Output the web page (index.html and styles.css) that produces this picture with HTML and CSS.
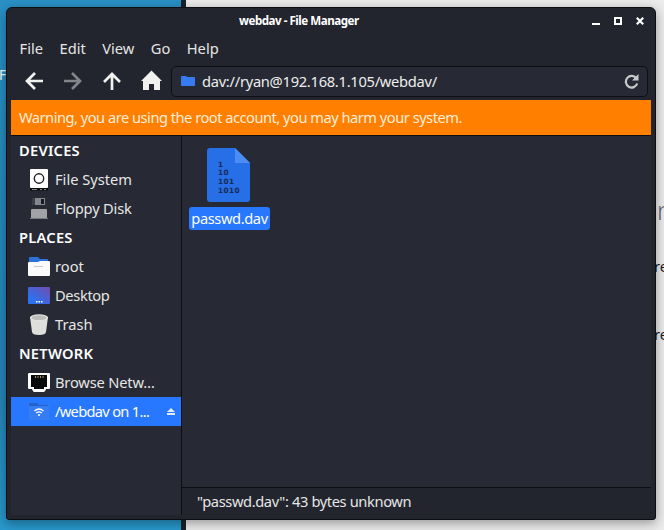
FILE: index.html
```html
<!DOCTYPE html>
<html lang="en">
<head>
<meta charset="utf-8">
<title>webdav - File Manager</title>
<link rel="stylesheet" href="styles.css">
</head>
<body>
<div class="wallpaper"></div>
<div class="browser"></div>
<span class="behind label-f">F</span>
<span class="behind letter-n">n</span>
<span class="behind re-one">re</span>
<span class="behind re-two">re</span>
<main class="window">
  <header class="titlebar">
    <h1 class="title">webdav - File Manager</h1>
    <svg class="controls" width="54" height="10" viewBox="0 0 54 10"><path d="M0 6h8v2H0z" fill="#fff"/><path d="M23 1h6v6h-6z" fill="none" stroke="#fff" stroke-width="2"/><path d="M44.8 .8l6.4 6.4M51.2 .8l-6.4 6.4" stroke="#fff" stroke-width="2.2"/></svg>
  </header>
  <nav class="menubar"><span>File</span><span>Edit</span><span>View</span><span>Go</span><span>Help</span></nav>
  <div class="toolbar">
    <svg class="tools" width="140" height="24" viewBox="0 0 140 24">
      <g fill="none" stroke-width="2.7">
        <path d="M20 12H4M12 4l-8 8 8 8" stroke="#f1f1ef"/>
        <path d="M41 12h16M49 4l8 8-8 8" stroke="#84858a"/>
        <path d="M89 21V5M81 13l8-8 8 8" stroke="#f1f1ef"/>
      </g>
      <path d="M128.500 1.500L139 12h-2v9h-6v-6h-5v6h-6v-9h-2z" fill="#f1f1ef"/>
    </svg>
    <div class="address">
      <svg width="14" height="11" viewBox="0 0 14 11"><path d="M0 1q0-1 1-1h4l1 1h7q1 0 1 1v7q0 1-1 1H1q-1 0-1-1z" fill="#367bf0"/></svg>
      <span class="path">dav://ryan@192.168.1.105/webdav/</span>
      <svg width="15" height="15" viewBox="0 0 15 15"><path d="M12.300 4.200A5.800 5.800 0 1 0 13.200 9.500" fill="none" stroke="#c9cacc" stroke-width="2.200"/><path d="M14.500 0v6.500H8z" fill="#c9cacc"/></svg>
    </div>
  </div>
  <div class="warning">Warning, you are using the root account, you may harm your system.</div>
  <div class="content">
    <aside class="sidebar">
      <h2>DEVICES</h2>
      <div class="place"><svg width="24" height="24" viewBox="0 0 24 24"><path d="M3 20h18v2.500H3z" fill="#08090b"/><path d="M5 21h5v1H5zM13 21h2v1h-2zM17 21h2v1h-2z" fill="#888"/><rect x="3" y="1" width="18" height="19" rx="1" fill="#fff"/><circle cx="12" cy="10.500" r="4.700" fill="none" stroke="#202126" stroke-width="1.400"/></svg><span>File System</span></div>
      <div class="place tight"><svg width="24" height="24" viewBox="0 0 24 24"><path d="M4 1h16l1 1v19H3V2z" fill="#292b32"/><path d="M5 1h13v7H5z" fill="#85878c"/><path d="M5 1h3v7H5z" fill="#3c3e45"/><path d="M14 2h3v5h-3z" fill="#17191e"/><path d="M5 12h14q1 0 1 1v8H4v-8q0-1 1-1z" fill="#a1a2a6"/><path d="M3 21h18v1H3z" fill="#77797e"/></svg><span>Floppy Disk</span></div>
      <h2>PLACES</h2>
      <div class="place"><svg width="24" height="24" viewBox="0 0 24 24"><path d="M2 3q0-1 1-1h8l2 2h7q1 0 1 1v6H2z" fill="#2d72d9"/><path d="M1 8q0-1 1-1h9l2-1h9q1 0 1 1v13q0 1-1 1H2q-1 0-1-1z" fill="#fafafa"/><path d="M7 11.500h9" stroke="#c9c9c9"/></svg><span>root</span></div>
      <div class="place desktop"><svg width="24" height="24" viewBox="0 0 24 24"><defs><linearGradient id="desk" x1="0" y1="1" x2="1" y2="0"><stop offset=".25" stop-color="#2c71ed"/><stop offset="1" stop-color="#764aae"/></linearGradient></defs><rect x="1" y="3" width="22" height="17" rx="1" fill="url(#desk)"/><path d="M9 17h1.500v1.500H9zM11.500 17H13v1.500h-1.500zM14 17h1.500v1.500H14z" fill="#fff"/></svg><span>Desktop</span></div>
      <div class="place"><svg width="24" height="24" viewBox="0 0 24 24"><path d="M3 4l2 15q.3 3 7 3t7-3l2-15z" fill="#dededc"/><ellipse cx="12" cy="4.500" rx="9" ry="3.300" fill="#e5e5e3"/><ellipse cx="12" cy="4.700" rx="7.500" ry="2.400" fill="#bdbdbb"/></svg><span>Trash</span></div>
      <h2>NETWORK</h2>
      <div class="place tight"><svg width="24" height="24" viewBox="0 0 24 24"><path d="M2 2h20q1 0 1 1v14q0 1-1 1h-3q-1 3-2 3H7q-1 0-2-3H2q-1 0-1-1V3q0-1 1-1z" fill="#fff"/><path d="M4 4h16v12h-3v2H7v-2H4z" fill="#090a0b"/><path d="M8.500 5v2M11 5v2M13.500 5v2M16 5v2" stroke="#a9966a"/></svg><span>Browse Netw…</span></div>
      <div class="place selected"><svg width="24" height="24" viewBox="0 0 24 24"><path d="M2 4q0-1 1-1h7l2 2h8q1 0 1 1v4H2z" fill="#2563c8"/><path d="M2 6h20v14H2z" fill="#347df2"/><g fill="none" stroke="#fff" stroke-width="1.200"><path d="M7.500 11q4.500-4 9 0M9.300 13q2.700-2.300 5.400 0"/></g><circle cx="12" cy="15" r="1" fill="#fff"/></svg><span>/webdav on 1...</span><svg class="eject" width="8" height="8" viewBox="0 0 8 8"><path d="M4 0l4 4H0zM0 5h8v2H0z" fill="#e4edff"/></svg></div>
    </aside>
    <section class="pane">
      <div class="files">
        <figure class="file">
          <svg width="43" height="54" viewBox="0 0 43 54"><path d="M3 0h25l15 15v36q0 3-3 3H3q-3 0-3-3V3q0-3 3-3z" fill="#266fe6"/><path d="M28 0l15 15H28z" fill="#4b8df5"/><g class="bits"><text x="11" y="18.500">1</text><text x="11" y="27">10</text><text x="11" y="36">101</text><text x="11" y="44.500">1010</text></g></svg>
          <figcaption>passwd.dav</figcaption>
        </figure>
      </div>
      <footer class="status">"passwd.dav": 43 bytes unknown</footer>
    </section>
  </div>
</main>
</body>
</html>
```
FILE: styles.css
```css
* { box-sizing: border-box; }
body {
  margin: 0;
  width: 664px;
  height: 530px;
  position: relative;
  overflow: hidden;
  display: flex;
  background: #1b2029;
  font: 14.67px/20px "Noto Sans", sans-serif;
  color: #e6e6e6;
}
svg { display: block; flex: none; }
.wallpaper {
  width: 181px;
  margin-right: 5px;
  background: linear-gradient(#2a91c6 0, #268bbd 35%, #2686b9 75%, #2899cc 100%);
}
.browser { flex: 1; background: #ececed; }
.behind { position: absolute; color: #1c1c20; white-space: nowrap; }
.label-f { left: -1px; top: 65px; color: #fff; font-size: 13.5px; }
.letter-n { left: 657px; top: 195px; font-size: 25px; line-height: 30px; color: #626875; font-weight: 300; }
.re-one { left: 654px; top: 256px; }
.re-two { left: 654px; top: 324px; }
.window {
  position: absolute;
  left: 6px;
  top: 7px;
  width: 650px;
  height: 513px;
  display: flex;
  flex-direction: column;
  padding: 0 4px 4px;
  background: #23252e;
  border: 1px solid #0d0e14;
  border-radius: 6px 6px 3px 3px;
  box-shadow: 0 3px 12px rgba(0, 0, 0, .38);
}
.titlebar {
  height: 28px;
  display: flex;
  justify-content: space-between;
  align-items: center;
  padding: 0 5px 0 228px;
}
.title {
  margin: 0 0 2px;
  font-size: 11.6px;
  line-height: 16px;
  font-weight: 700;
  letter-spacing: -.48px;
  color: #fff;
  white-space: nowrap;
}
.menubar { height: 27px; display: flex; gap: 16.3px; padding: 2px 8.5px; }
.menubar span { letter-spacing: .05px; }
.toolbar { height: 37px; display: flex; align-items: center; padding: 0 3px 1px 12px; }
.tools { margin-right: 8px; }
.address {
  flex: 1;
  height: 31px;
  display: flex;
  align-items: center;
  padding: 0 8px 0 9px;
  background: #272a34;
  border: 1px solid #0e0f15;
  border-radius: 5px;
  color: #eee;
}
.path { margin-left: 7px; flex: 1; letter-spacing: -.27px; }
.warning {
  height: 36px;
  padding: 7px 8px;
  background: #ff8000;
  border-bottom: 1px solid #0d0e14;
  color: #ffecd9;
  letter-spacing: -.5px;
}
.content { flex: 1; display: flex; background: #272a34; }
.sidebar { width: 171px; border-right: 1px solid #0d0e14; }
.sidebar h2 { height: 29px; margin: 0; padding: 4px 8px; font-size: 14.67px; line-height: 20px; font-weight: 600; letter-spacing: .25px; color: #fff; }
.place { height: 29px; display: flex; align-items: center; padding-left: 16px; }
.place span { margin: 0 0 2px 4px; white-space: nowrap; }
.tight { letter-spacing: -.17px; }
.desktop { letter-spacing: -.35px; }
.selected { background: #2777ff; color: #fff; letter-spacing: -.7px; }
.eject { margin: 0 6px 0 auto; }
.pane { flex: 1; display: flex; flex-direction: column; }
.files { flex: 1; padding: 12px 7px; }
.file { width: 81px; margin: 0; display: flex; flex-direction: column; align-items: center; }
.file svg { margin-left: -2px; }
.bits { font: 700 7.3px "DejaVu Sans", sans-serif; letter-spacing: .4px; fill: #172b55; }
figcaption {
  width: 81px;
  height: 23px;
  margin-top: 5px;
  padding-top: 1px;
  border-radius: 3px;
  background: #2777ff;
  color: #fff;
  text-align: center;
  letter-spacing: -.4px;
}
.status { height: 28px; padding: 3px 15px; border-top: 1px solid #0d0e14; background: #23252e; letter-spacing: -.38px; }
```
